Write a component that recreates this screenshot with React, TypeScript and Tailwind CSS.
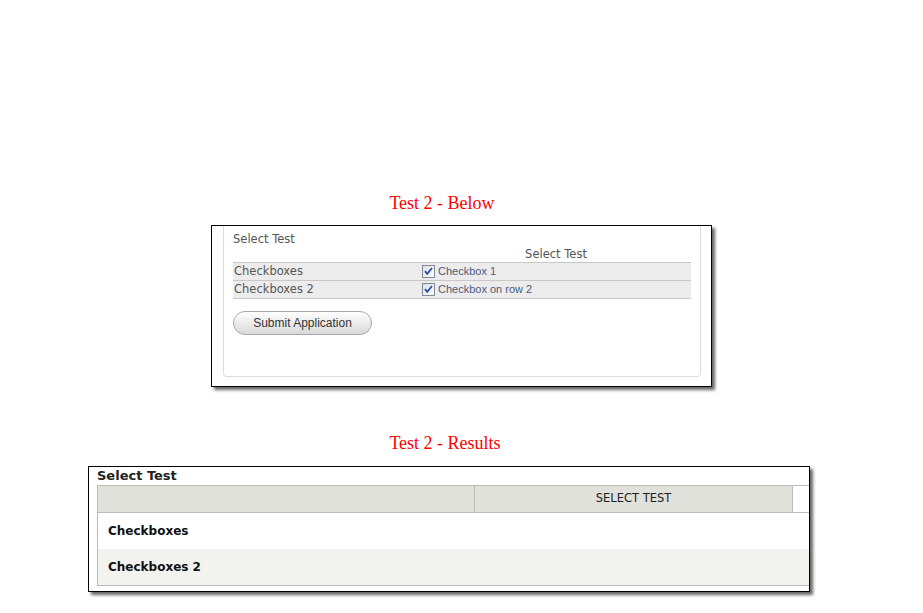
import React from 'react';

const sans = { fontFamily: '"DejaVu Sans", Verdana, sans-serif' };
const arial = { fontFamily: '"Liberation Sans", Arial, sans-serif' };
const serif = { fontFamily: '"Liberation Serif", "Times New Roman", serif' };

const CheckMark: React.FC = () => (
  <svg width="13" height="13" viewBox="0 0 13 13" className="shrink-0">
    <defs>
      <linearGradient id="cbg" x1="0" y1="0" x2="1" y2="1">
        <stop offset="0" stopColor="#dcdce4" />
        <stop offset="1" stopColor="#ffffff" />
      </linearGradient>
    </defs>
    <rect x="0.5" y="0.5" width="12" height="12" fill="url(#cbg)" stroke="#7f8a99" />
    <path d="M3 6.2 L5.2 8.8 L10 3" fill="none" stroke="#2a4ea8" strokeWidth="1.8" />
  </svg>
);

const formRows = [
  { label: 'Checkboxes', option: 'Checkbox 1' },
  { label: 'Checkboxes 2', option: 'Checkbox on row 2' },
];

const Title: React.FC<{ text: string; shift: string }> = ({ text, shift }) => (
  <div className={`text-center text-[18px] leading-[20px] text-[#ff0000] ${shift}`} style={serif}>
    {text}
  </div>
);

export default function App() {
  return (
    <div className="w-[923px] h-[613px] bg-white overflow-hidden">
      <div className="pt-[193px]">
        <Title text="Test 2 - Below" shift="pr-[39px]" />
      </div>

      {/* form preview */}
      <div className="ml-[211px] mt-[12px] w-[501px] h-[162px] border border-black bg-white shadow-[3px_3px_3px_rgba(0,0,0,0.6)]">
        <div className="ml-[11px] w-[478px] h-[151px] border-x border-b border-[#dcdcdc] rounded-b-[4px] pl-[9px] pt-[6px]">
          <div className="text-[11.5px] leading-[14px] text-[#555]" style={sans}>Select Test</div>
          <div className="flex w-[458px] mt-[1px]">
            <div className="w-[188px]" />
            <div className="flex-1 text-center text-[11.5px] leading-[14px] text-[#555]" style={sans}>
              Select Test
            </div>
          </div>
          <div className="w-[458px] mt-[1px] border-b border-[#c8c8c8]">
            {formRows.map((r) => (
              <div key={r.label} className="flex h-[18px] items-center border-t border-[#c8c8c8] bg-[#ececec]">
                <div className="w-[188px] pl-[1px] text-[11.5px] text-[#555]" style={sans}>{r.label}</div>
                <div className="flex items-center gap-[3px] pl-[1px]">
                  <CheckMark />
                  <span className="text-[11px] text-[#4c5b78]" style={arial}>{r.option}</span>
                </div>
              </div>
            ))}
          </div>
          <button
            className="mt-[12px] w-[139px] h-[24px] rounded-full border border-[#a9a9a9] bg-gradient-to-b from-[#ffffff] to-[#d9d9d9] text-[12px] text-[#333]"
            style={arial}
          >
            Submit Application
          </button>
        </div>
      </div>

      <div className="mt-[46px]">
        <Title text="Test 2 - Results" shift="pr-[33px]" />
      </div>

      {/* results table */}
      <div className="ml-[88px] mt-[13px] w-[722px] h-[126px] border border-black bg-white shadow-[3px_3px_3px_rgba(0,0,0,0.6)] overflow-hidden">
        <div className="pl-[8px] h-[18px] text-[13px] leading-[17px] font-bold text-[#222]" style={sans}>
          Select Test
        </div>
        <div className="ml-[8px] border-l border-t border-b border-[#bdbdb8]">
          <div className="flex h-[27px] border-b border-[#bdbdb8]">
            <div className="w-[377px] bg-[#e1e1dc] border-r border-[#bdbdb8]" />
            <div
              className="w-[318px] bg-[#e1e1dc] border-r border-[#bdbdb8] flex items-center justify-center text-[11.5px] text-[#222]"
              style={sans}
            >
              SELECT TEST
            </div>
          </div>
          <div className="h-[36px] flex items-center pl-[10px] text-[12px] font-bold text-[#111]" style={sans}>
            Checkboxes
          </div>
          <div className="h-[36px] flex items-center pl-[10px] bg-[#f2f2ee] text-[12px] font-bold text-[#111]" style={sans}>
            Checkboxes 2
          </div>
        </div>
      </div>
    </div>
  );
}
